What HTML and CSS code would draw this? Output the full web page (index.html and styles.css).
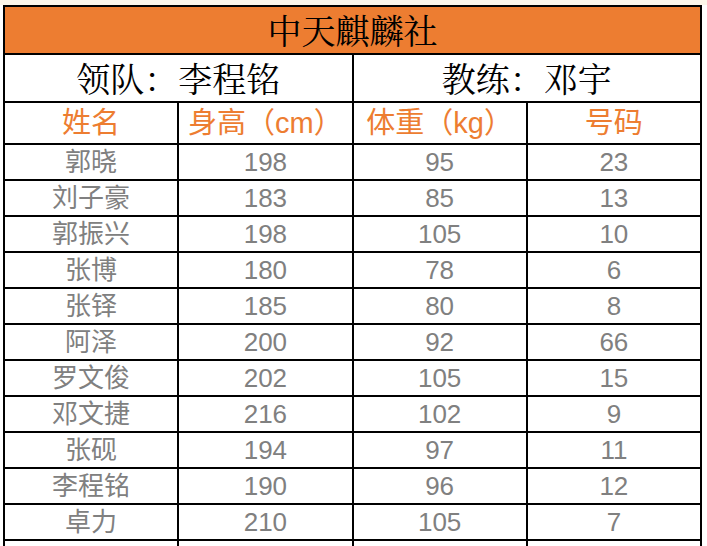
FILE: index.html
```html
<!DOCTYPE html>
<html lang="zh-CN">
<head>
<meta charset="utf-8">
<link rel="stylesheet" href="styles.css">
<title>中天麒麟社</title>
</head>
<body>
<div class="sheet">
<table class="roster">
  <tr class="title-row"><td colspan="4" class="title">中天麒麟社</td></tr>
  <tr class="staff-row">
    <td colspan="2" class="staff">领队：李程铭</td>
    <td colspan="2" class="staff">教练：邓宇</td>
  </tr>
  <tr class="head-row">
    <td class="head">姓名</td>
    <td class="head">身高（cm）</td>
    <td class="head">体重（kg）</td>
    <td class="head">号码</td>
  </tr>
  <tr class="data-row"><td>郭晓</td><td>198</td><td>95</td><td>23</td></tr>
  <tr class="data-row"><td>刘子豪</td><td>183</td><td>85</td><td>13</td></tr>
  <tr class="data-row"><td>郭振兴</td><td>198</td><td>105</td><td>10</td></tr>
  <tr class="data-row"><td>张博</td><td>180</td><td>78</td><td>6</td></tr>
  <tr class="data-row"><td>张铎</td><td>185</td><td>80</td><td>8</td></tr>
  <tr class="data-row"><td>阿泽</td><td>200</td><td>92</td><td>66</td></tr>
  <tr class="data-row"><td>罗文俊</td><td>202</td><td>105</td><td>15</td></tr>
  <tr class="data-row"><td>邓文捷</td><td>216</td><td>102</td><td>9</td></tr>
  <tr class="data-row"><td>张砚</td><td>194</td><td>97</td><td>11</td></tr>
  <tr class="data-row"><td>李程铭</td><td>190</td><td>96</td><td>12</td></tr>
  <tr class="data-row"><td>卓力</td><td>210</td><td>105</td><td>7</td></tr>
  <tr class="data-row"><td></td><td></td><td></td><td></td></tr>
</table>
</div>
</body>
</html>
```
FILE: styles.css
```css
html, body {
  margin: 0;
  padding: 0;
  background: #ffffff;
  overflow: hidden;
}
.sheet {
  padding: 5px 5px 0 3px;
  background: linear-gradient(#fcf6ea 0, #fcf6ea 5px, #ffffff 5px);
  height: 546px;
  box-sizing: border-box;
  overflow: hidden;
}
.roster {
  border-collapse: collapse;
  width: 699px;
  table-layout: fixed;
  background: #ffffff;
}
.roster td {
  border: 2px solid #000000;
  text-align: center;
  vertical-align: middle;
  padding: 0;
  line-height: 1;
  white-space: nowrap;
}
.title-row td {
  height: 46px;
}
.title {
  background: #ed7d31;
  color: #000000;
  font-family: "Noto Serif CJK SC", "Noto Sans CJK SC", serif;
  font-size: 34px;
}
.staff-row td {
  height: 46px;
}
.staff {
  font-family: "Noto Serif CJK SC", "Noto Sans CJK SC", serif;
  font-size: 34px;
  color: #000000;
}
.head-row td {
  height: 40px;
}
.head {
  font-family: "Liberation Sans", "Noto Sans CJK SC", sans-serif;
  font-size: 29px;
  color: #ed7d31;
}
.data-row td {
  height: 34px;
  font-family: "Liberation Sans", "Noto Sans CJK SC", sans-serif;
  font-size: 26px;
  color: #808080;
}
```
